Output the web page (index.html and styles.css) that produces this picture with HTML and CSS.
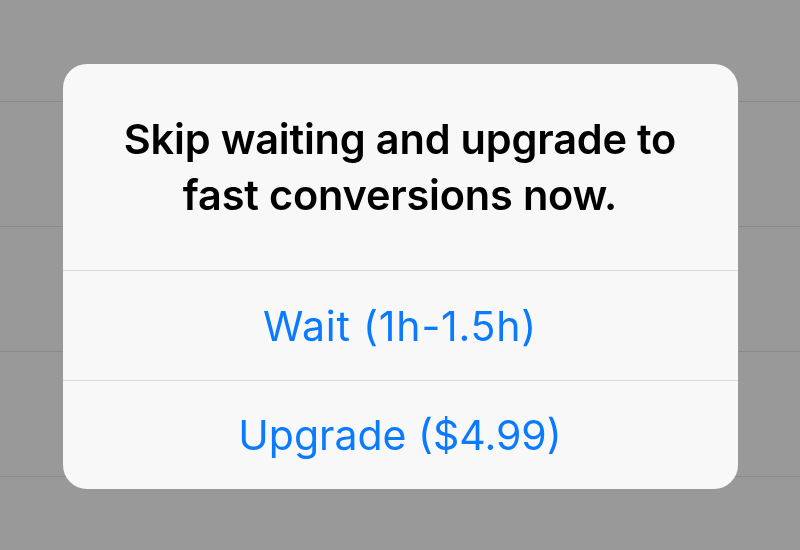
FILE: index.html
```html
<!DOCTYPE html>
<html lang="en">
<head>
    <meta charset="UTF-8">
    <meta name="viewport" content="width=device-width, initial-scale=1.0">
    <title>Upgrade</title>
    <link rel="stylesheet" href="styles.css">
</head>
<body>
    <div class="list">
        <div class="row row-first"></div>
        <div class="row"></div>
        <div class="row"></div>
        <div class="row"></div>
    </div>

    <div class="overlay">
        <div class="alert">
            <div class="alert-title">Skip waiting and upgrade to fast conversions now.</div>
            <button type="button" class="alert-btn">Wait (1h-1.5h)</button>
            <button type="button" class="alert-btn">Upgrade ($4.99)</button>
        </div>
    </div>
</body>
</html>
```

FILE: styles.css
```css
:root {
    --dim-bg: #999999;
    --row-line: #8a8a8a;
    --alert-bg: #f8f8f8;
    --separator: #dcdcde;
    --text-dark: #000000;
    --tint: #0a7aff;
}

* {
    margin: 0;
    padding: 0;
    box-sizing: border-box;
    font-family: Inter, 'Noto Sans', 'Liberation Sans', sans-serif;
}

html, body {
    height: 100%;
}

body {
    background-color: var(--dim-bg);
    overflow: hidden;
}

.row {
    height: 125px;
    border-bottom: 1px solid var(--row-line);
}

.row-first {
    height: 102px;
}

.overlay {
    position: fixed;
    inset: 0;
    display: flex;
    justify-content: center;
    align-items: center;
    padding-top: 3px;
}

.alert {
    width: 675px;
    background-color: var(--alert-bg);
    border-radius: 24px;
    overflow: hidden;
    display: flex;
    flex-direction: column;
}

.alert-title {
    height: 206px;
    display: flex;
    align-items: center;
    justify-content: center;
    text-align: center;
    padding: 0 50px;
    color: var(--text-dark);
    font-size: 41.5px;
    font-weight: 600;
    line-height: 56px;
    letter-spacing: -0.2px;
}

.alert-btn {
    height: 110px;
    border: none;
    border-top: 1.5px solid var(--separator);
    background: none;
    color: var(--tint);
    font-size: 41px;
    font-weight: 400;
    cursor: pointer;
}

.alert-btn:first-of-type {
    letter-spacing: 0.8px;
}

.alert-btn:last-child {
    height: 109px;
}
```
